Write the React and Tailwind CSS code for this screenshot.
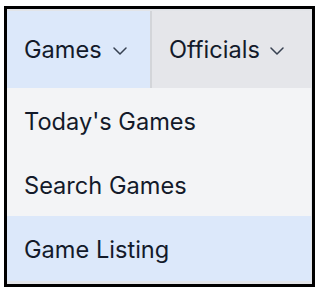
import { useState } from 'react';

function Chevron() {
    return (
        <svg width="14" height="8" viewBox="0 0 14 8" fill="none" className="shrink-0">
            <polyline points="1,1 7,7 13,1" stroke="#374151" strokeWidth="1.5" strokeLinecap="round" strokeLinejoin="round" />
        </svg>
    );
}

const items = ["Today's Games", 'Search Games', 'Game Listing'];

export default function App() {
    const [active, setActive] = useState('Game Listing');

    return (
        <div className="h-[294px] w-[320px] bg-white pl-[4px] pt-[6px]" style={{ fontFamily: 'Inter, "Noto Sans", sans-serif' }}>
            <div className="h-[281px] w-[311px] border-[3px] border-black bg-[#e2e4e8] pb-[2px] pr-px">
                <div className="flex h-[79px] pt-[2px] text-[23.6px] text-[#131a2a]">
                    <button type="button" className="flex w-[143px] items-center pl-[17px] bg-[#dce8fa]">
                        <span>Games</span>
                        <span className="ml-[11px] mt-[2px]"><Chevron /></span>
                    </button>
                    <div className="w-[2px] bg-[#d3d5d9]" />
                    <button type="button" className="flex flex-1 items-center pl-[17px] bg-[#e5e6ea]">
                        <span>Officials</span>
                        <span className="ml-[10px] mt-[2px]"><Chevron /></span>
                    </button>
                </div>
                <ul className="text-[23.6px] text-[#131a2a]">
                    {items.map((item, index) => (
                        <li
                            key={item}
                            onClick={() => setActive(item)}
                            className={`flex items-center pl-[17px] pt-[3px] ${index === 2 ? 'h-[65px]' : 'h-[64px]'} ${active === item ? 'bg-[#dce8fa]' : 'bg-[#f3f4f6]'}`}
                        >
                            {item}
                        </li>
                    ))}
                </ul>
            </div>
        </div>
    );
}
